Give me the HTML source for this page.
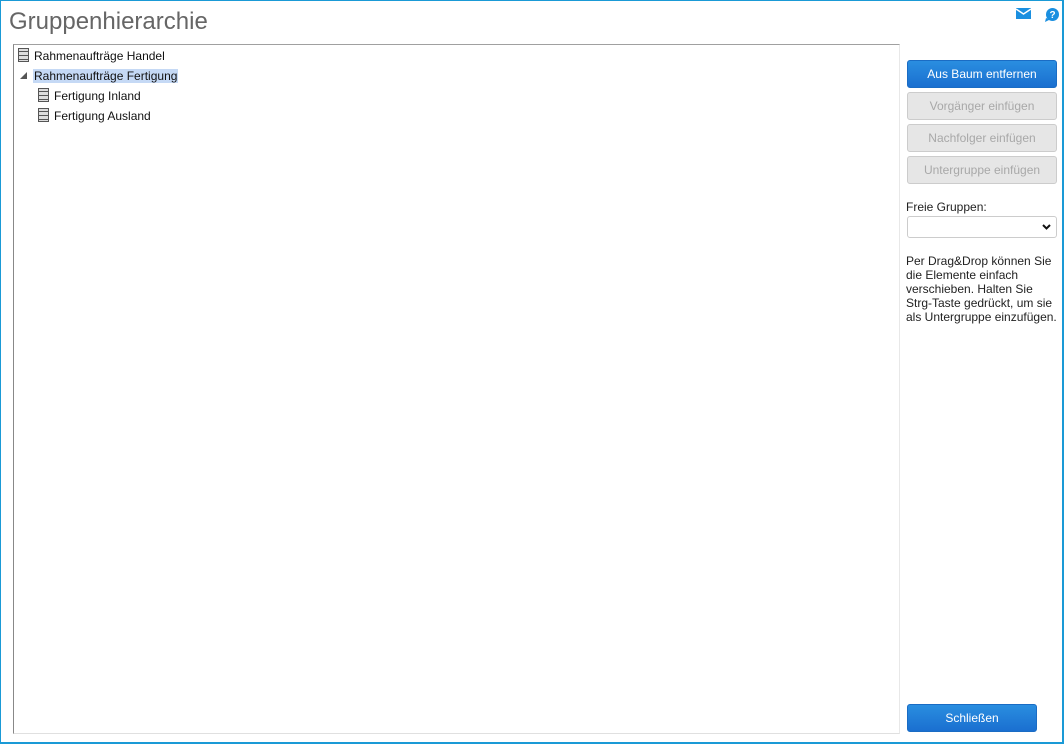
<!DOCTYPE html>
<html><head><meta charset="utf-8"><style>
*{box-sizing:border-box;margin:0;padding:0}
body{width:1064px;height:744px;background:#fff;font-family:"Liberation Sans",Arial,sans-serif;position:relative;overflow:hidden}
.frame{position:absolute;left:0;top:0;width:1064px;height:744px;border:1px solid #1a9ad6;border-right-width:2px;border-bottom-width:2px}
h1{position:absolute;left:9px;top:8px;font-size:24px;font-weight:normal;color:#666}
.tree{position:absolute;left:13px;top:44px;width:887px;height:690px;border-top:1px solid #a0a0a0;border-left:1px solid #888;border-right:1px solid #e8e8e8;border-bottom:1px solid #e0e0e0}
.row{position:absolute;font-size:12px;color:#111;height:16px;line-height:16px}
.ic{position:absolute;width:11px;height:14px;border:1px solid #555;background:repeating-linear-gradient(#ddd 0 2px,#555 2px 3px,#ddd 3px 4px)}
.sel{background:#c5d9f5;padding:0 1px}
.btn{position:absolute;left:907px;width:150px;height:28px;border-radius:3px;font-size:12px;text-align:center;line-height:27px}
.blue{background:linear-gradient(#2a8ee0,#1a6fd0);color:#fff;border:1px solid #1a6cc4}
.dis{background:#e6e6e6;border:1px solid #ccc;color:#a8a8a8}
.lbl{position:absolute;left:906px;font-size:12px;color:#222}
.sel2{position:absolute;left:907px;top:216px;width:150px;height:22px;border:1px solid #ccc;border-radius:3px;background:#fff}
</style></head><body>
<div class="frame"></div>
<h1>Gruppenhierarchie</h1>
<svg style="position:absolute;left:1016px;top:8px" width="15" height="11" viewBox="0 0 15 11"><rect width="15" height="11" fill="#1a8fe0"/><path d="M0 1 L7.5 6 L15 1" stroke="#fff" stroke-width="1.5" fill="none"/></svg>
<svg style="position:absolute;left:1044px;top:7px" width="16" height="16" viewBox="0 0 16 16"><circle cx="8.5" cy="7.5" r="6.5" fill="#1a8fe0"/><path d="M2 11 L1 15 L6 12.5Z" fill="#1a8fe0"/><text x="8.5" y="11" font-size="10" font-weight="bold" fill="#fff" text-anchor="middle" font-family="Liberation Sans">?</text></svg>
<div class="tree"></div>
<div class="ic" style="left:18px;top:48px"></div>
<div class="row" style="left:34px;top:48px">Rahmenaufträge Handel</div>
<svg style="position:absolute;left:20px;top:72px" width="7" height="7"><path d="M7 0 L7 7 L0 7Z" fill="#555"/></svg>
<div class="row" style="left:33px;top:68px"><span class="sel">Rahmenaufträge Fertigung</span></div>
<div class="ic" style="left:38px;top:88px"></div>
<div class="row" style="left:54px;top:88px">Fertigung Inland</div>
<div class="ic" style="left:38px;top:108px"></div>
<div class="row" style="left:54px;top:108px">Fertigung Ausland</div>
<div class="btn blue" style="top:60px">Aus Baum entfernen</div>
<div class="btn dis" style="top:92px">Vorgänger einfügen</div>
<div class="btn dis" style="top:124px">Nachfolger einfügen</div>
<div class="btn dis" style="top:156px">Untergruppe einfügen</div>
<div class="lbl" style="top:200px">Freie Gruppen:</div>
<div class="sel2"><svg style="position:absolute;right:5px;top:7px" width="9" height="6"><path d="M1 1 L4.5 4.5 L8 1" stroke="#111" stroke-width="2" fill="none"/></svg></div>
<div class="lbl" style="top:254px;line-height:14px;width:155px">Per Drag&amp;Drop können Sie die Elemente einfach verschieben. Halten Sie Strg-Taste gedrückt, um sie als Untergruppe einzufügen.</div>
<div class="btn blue" style="top:704px;width:130px">Schließen</div>
</body></html>
